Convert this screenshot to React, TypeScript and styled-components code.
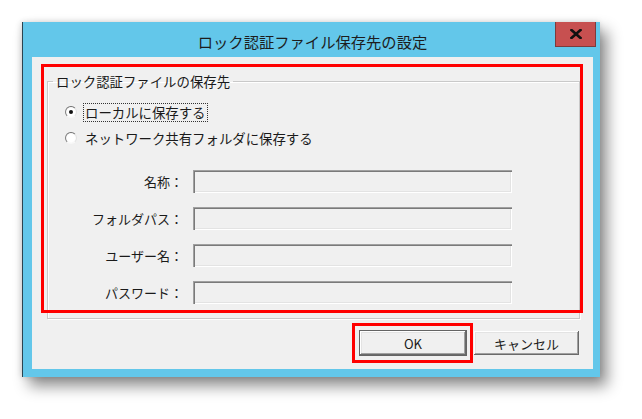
import React from 'react';
import styled, { createGlobalStyle } from 'styled-components';

const GlobalStyle = createGlobalStyle`
	body {
		margin: 0;
		background: #fff;
	}
`;

const Page = styled.div`
	width: 642px;
	height: 419px;
	box-sizing: border-box;
	padding: 22px 0 0 22px;
	font-family: 'Noto Sans CJK JP', 'Noto Sans', sans-serif;
	color: #1a1a1a;
	overflow: hidden;
`;

const Window = styled.div`
	width: 578px;
	height: 355px;
	box-sizing: border-box;
	display: flex;
	flex-direction: column;
	background: #63c7ea;
	border-left: 1px solid #2b4450;
	padding: 0 7px 8px 9px;
	box-shadow: 7px 9px 14px rgba(0, 0, 0, 0.45), -1px 0 6px rgba(0, 0, 0, 0.15);
`;

const TitleBar = styled.div`
	height: 35px;
	display: grid;
	grid-template-columns: 1fr auto 1fr;
`;

const Title = styled.div`
	grid-column: 2;
	font-size: 15.3px;
	line-height: 35px;
	padding-top: 2px;
	color: #1d1d1d;
	white-space: nowrap;
`;

const CloseButton = styled.div`
	grid-column: 3;
	justify-self: end;
	align-self: start;
	width: 41px;
	height: 25px;
	box-sizing: border-box;
	margin-right: -3px;
	background: #c75050;
	border: 1px solid #7d3b3b;
	border-top: none;
	display: flex;
	align-items: center;
	justify-content: center;
`;

const Content = styled.div`
	flex: 1;
	position: relative;
	background: #f0f0f0;
	padding: 15px 13px 13px 15px;
	display: flex;
	flex-direction: column;
`;

const Group = styled.fieldset`
	margin: 0;
	padding: 0 0 14px 0;
	min-width: 0;
	border: 1px solid #c9c9c9;
	box-shadow: 1px 1px 0 #fff, inset 1px 1px 0 #fff;
`;

const Legend = styled.legend`
	margin-left: 5px;
	padding: 0 3px;
	font-size: 13.4px;
	line-height: 18px;
`;

const RadioGroup = styled.div`
	display: flex;
	flex-direction: column;
	gap: 6px;
	padding: 12px 0 0 17px;
`;

const RadioRow = styled.div`
	display: flex;
	align-items: center;
	height: 20px;
`;

const Radio = styled.span<{ $checked?: boolean }>`
	width: 12px;
	height: 12px;
	box-sizing: border-box;
	border-radius: 50%;
	border: 1px solid;
	border-color: #6f6f6f #e2e2e2 #f8f8f8 #7f7f7f;
	background: radial-gradient(circle, #fff 0 50%, #eeeeee 100%);
	display: flex;
	align-items: center;
	justify-content: center;
	&::after {
		content: '';
		width: 4px;
		height: 4px;
		border-radius: 50%;
		background: #111;
		display: ${(p) => (p.$checked ? 'block' : 'none')};
	}
`;

const RadioLabel = styled.span<{ $focused?: boolean }>`
	margin-left: 6px;
	padding: 0 1px;
	font-size: 13.4px;
	line-height: 17px;
	border: 1px dotted ${(p) => (p.$focused ? '#333' : 'transparent')};
	white-space: nowrap;
`;

const FormGrid = styled.div`
	margin-top: 22px;
	display: grid;
	grid-template-columns: 135px 319px;
	column-gap: 10px;
	row-gap: 14px;
`;

const FieldLabel = styled.div`
	text-align: right;
	font-size: 13px;
	line-height: 23px;
	white-space: nowrap;
`;

const Field = styled.div`
	height: 23px;
	background: #f0f0f0;
	box-shadow: inset 1px 1px 0 #a0a0a0, inset 2px 2px 0 #7a7a7a, inset -1px -1px 0 #fff, inset -2px -2px 0 #e3e3e3;
`;

const ButtonRow = styled.div`
	margin-top: 11px;
	display: flex;
	justify-content: flex-end;
	gap: 6px;
`;

const Button = styled.div<{ $default?: boolean; $width: number }>`
	width: ${(p) => p.$width}px;
	height: 26px;
	box-sizing: border-box;
	display: flex;
	align-items: center;
	justify-content: center;
	font-size: 13px;
	background: #f0f0f0;
	border: 1px solid ${(p) => (p.$default ? '#646464' : 'transparent')};
	box-shadow: inset -1px -1px 0 #6a6a6a, inset 1px 1px 0 #fff, inset -2px -2px 0 #a0a0a0, inset 2px 2px 0 #e3e3e3;
`;

const Highlight = styled.div<{ $left: number; $top: number; $width: number; $height: number }>`
	position: absolute;
	left: ${(p) => p.$left}px;
	top: ${(p) => p.$top}px;
	width: ${(p) => p.$width}px;
	height: ${(p) => p.$height}px;
	box-sizing: border-box;
	border: 3px solid #ff0000;
	pointer-events: none;
`;

const fields = ['名称：', 'フォルダパス：', 'ユーザー名：', 'パスワード：'];

const App: React.FC = () => (
	<Page>
		<GlobalStyle />
		<Window>
			<TitleBar>
				<Title>ロック認証ファイル保存先の設定</Title>
				<CloseButton>
					<svg width="12" height="10" viewBox="0 0 12 10">
						<path d="M1.5 1 L10.5 9 M10.5 1 L1.5 9" stroke="#111" strokeWidth="2.6" strokeLinecap="square" />
					</svg>
				</CloseButton>
			</TitleBar>
			<Content>
				<Group>
					<Legend>ロック認証ファイルの保存先</Legend>
					<RadioGroup>
						<RadioRow>
							<Radio $checked />
							<RadioLabel $focused>ローカルに保存する</RadioLabel>
						</RadioRow>
						<RadioRow>
							<Radio />
							<RadioLabel>ネットワーク共有フォルダに保存する</RadioLabel>
						</RadioRow>
					</RadioGroup>
					<FormGrid>
						{fields.map((label) => (
							<React.Fragment key={label}>
								<FieldLabel>{label}</FieldLabel>
								<Field />
							</React.Fragment>
						))}
					</FormGrid>
				</Group>
				<ButtonRow>
					<Button $default $width={108}>OK</Button>
					<Button $width={107}>キャンセル</Button>
				</ButtonRow>
				<Highlight $left={9} $top={7} $width={542} $height={249} />
				<Highlight $left={320} $top={266} $width={121} $height={40} />
			</Content>
		</Window>
	</Page>
);

export default App;
